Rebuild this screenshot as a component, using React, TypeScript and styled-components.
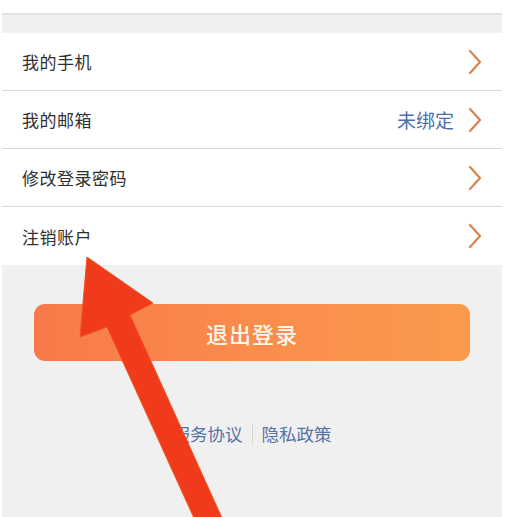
import React from 'react';
import styled, { createGlobalStyle } from 'styled-components';

const GlobalStyle = createGlobalStyle`
  html, body {
    margin: 0;
    padding: 0;
    background: #ffffff;
  }
  body {
    font-family: "Noto Sans CJK SC", "Noto Sans", sans-serif;
  }
`;

const Page = styled.div`
  position: relative;
  width: 509px;
  height: 517px;
  overflow: hidden;
`;

const Screen = styled.div`
  width: 500px;
  height: 517px;
  margin-left: 2px;
  background: #f0f0f0;
  display: flex;
  flex-direction: column;
`;

const TopStrip = styled.div`
  height: 13px;
  background: #ffffff;
  border-bottom: 2px solid #e2e2e2;
`;

const Spacer = styled.div`
  height: 18px;
`;

const List = styled.div`
  background: #ffffff;
  display: flex;
  flex-direction: column;
`;

const Row = styled.div<{ $last?: boolean }>`
  height: ${p => (p.$last ? 58 : 57)}px;
  display: flex;
  align-items: center;
  padding: 0 20px 0 20px;
  border-bottom: ${p => (p.$last ? 'none' : '1px solid #d9d9d9')};
`;

const Label = styled.span`
  flex: 1;
  font-size: 17px;
  color: #2f2f2f;
  letter-spacing: 0.5px;
`;

const Value = styled.span`
  font-size: 19px;
  color: #4d6fab;
  margin-right: 14px;
`;

const LogoutButton = styled.button`
  margin: 39px 32px 0;
  height: 57px;
  border: none;
  border-radius: 11px;
  background: linear-gradient(90deg, #f8794a 0%, #fa8c4c 50%, #fb9a4d 100%);
  color: #fff7ee;
  font-family: inherit;
  font-size: 22px;
  font-weight: 500;
  letter-spacing: 1px;
  display: flex;
  align-items: center;
  justify-content: center;
`;

const Links = styled.div`
  margin-top: 60px;
  display: flex;
  justify-content: center;
  align-items: center;
  gap: 9px;
  font-size: 17.5px;
  color: #5573a8;
`;

const Divider = styled.span`
  width: 1px;
  height: 22px;
  background: #d6d6d6;
`;

const Overlay = styled.svg`
  position: absolute;
  left: 0;
  top: 0;
  pointer-events: none;
`;

const Chevron = () => (
  <svg width="14" height="26" viewBox="0 0 14 26">
    <polyline
      points="2,2 12,13 2,24"
      fill="none"
      stroke="#d8834d"
      strokeWidth="2.2"
      strokeLinecap="round"
      strokeLinejoin="round"
    />
  </svg>
);

const items = [
  { label: '我的手机' },
  { label: '我的邮箱', value: '未绑定' },
  { label: '修改登录密码' },
  { label: '注销账户' },
];

export default function App() {
  return (
    <>
      <GlobalStyle />
      <Page>
        <Screen>
          <TopStrip />
          <Spacer />
          <List>
            {items.map((item, i) => (
              <Row key={item.label} $last={i === items.length - 1}>
                <Label>{item.label}</Label>
                {item.value && <Value>{item.value}</Value>}
                <Chevron />
              </Row>
            ))}
          </List>
          <LogoutButton>退出登录</LogoutButton>
          <Links>
            <span>服务协议</span>
            <Divider />
            <span>隐私政策</span>
          </Links>
        </Screen>
        <Overlay width="509" height="517" viewBox="0 0 509 517">
          <polygon
            points="87,257 153,303 130,315 232,540 204,540 107,327 80,337"
            fill="#f03a1c"
            stroke="#f2531f"
            strokeWidth="1"
            strokeLinejoin="round"
          />
        </Overlay>
      </Page>
    </>
  );
}
